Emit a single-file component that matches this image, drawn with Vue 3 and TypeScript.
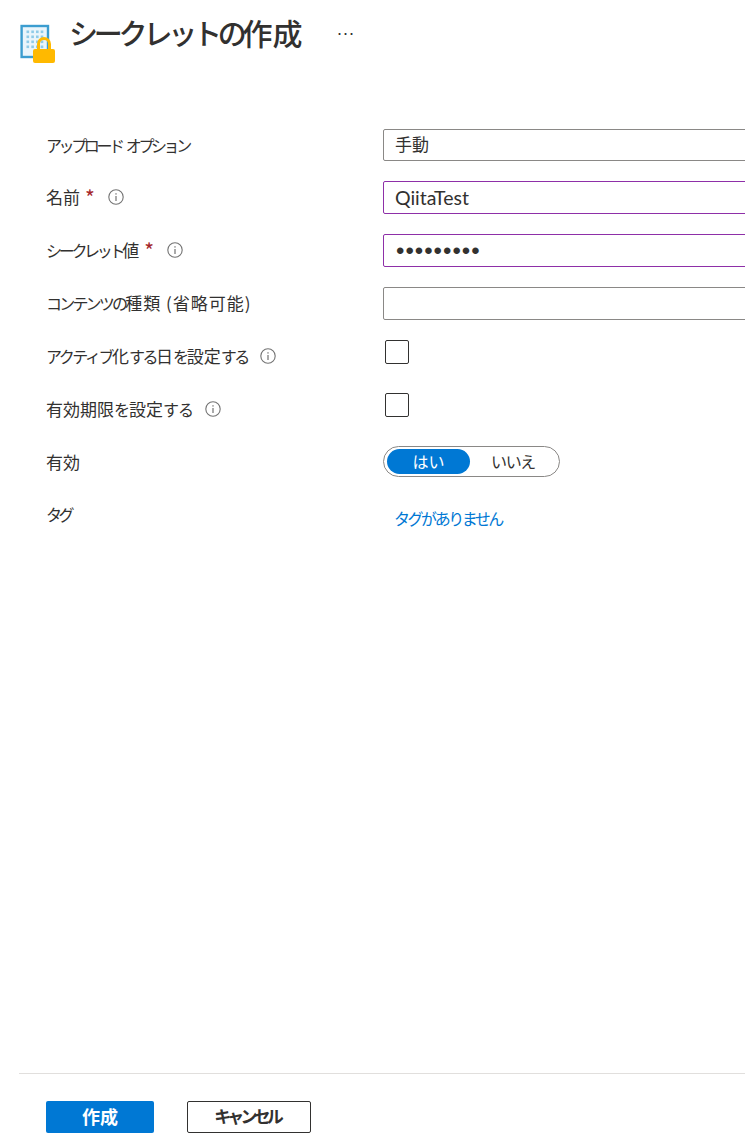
<script setup lang="ts">
interface Row { label: string; kana: number; kanji?: number; req?: boolean; info?: boolean; cls?: string }
const rows: Row[] = [
  { label: 'アップロード オプション', kana: -3.4, cls: 'first' },
  { label: '名前', kana: 0, req: true, info: true },
  { label: 'シークレット値', kana: -3.3, req: true, info: true },
  { label: 'コンテンツの種類 (省略可能)', kana: -2.8, kanji: 1 },
  { label: 'アクティブ化する日を設定する', kana: -2.45, info: true },
  { label: '有効期限を設定する', kana: -1, info: true },
  { label: '有効', kana: 0 },
  { label: 'タグ', kana: -3.4, cls: 'tag' }
]
// Kana runs are set narrower than kanji, as in the reference's UI font.
const split = (r: Row) =>
  (r.label.match(/[\u4e00-\u9fff()]+(?: [\u4e00-\u9fff()]+)*| ?[\u3040-\u30ff]+/g) ?? []).map((t) => {
    const kana = /[\u3040-\u30ff]/.test(t)
    return { t, kana, track: (kana ? r.kana : r.kanji ?? 0) + 'px' }
  })
</script>

<template>
  <div class="page">
    <header class="head">
      <svg class="logo" width="37" height="46" viewBox="0 0 37 46">
        <rect x="2.6" y="8" width="26.4" height="31" fill="#eaf5fb" stroke="#3b9dd0" stroke-width="2.4" />
        <g fill="#8fcbe8">
          <template v-for="y in [12.5, 17.5, 22.5, 27.5]" :key="y">
            <rect v-for="x in [7.5, 12.3, 17, 21.7]" :key="x" :x="x" :y="y" width="2.6" height="2.6" />
          </template>
        </g>
        <path d="M19.5 32v-6a5.5 5.5 0 0 1 11 0v6" fill="none" stroke="#ffb900" stroke-width="3" />
        <rect x="14" y="31" width="22" height="14" rx="2" fill="#ffb900" />
      </svg>
      <h1 class="title"><span class="tkana">シークレットの</span>作成</h1>
      <span class="more">···</span>
    </header>

    <div class="form">
      <div class="labels">
        <div v-for="r in rows" :key="r.label" class="label" :class="r.cls">
          <span class="text">
            <span
              v-for="(p, i) in split(r)"
              :key="i"
              :class="{ kana: p.kana }"
              :style="{ letterSpacing: p.track }"
            >{{ p.t }}</span>
          </span>
          <span v-if="r.req" class="req">*</span>
          <svg v-if="r.info" class="info" width="16" height="16" viewBox="0 0 16 16">
            <circle cx="8" cy="8" r="7.2" fill="none" stroke="#737373" stroke-width="1.1" />
            <rect x="7.4" y="7" width="1.2" height="5" fill="#737373" />
            <rect x="7.4" y="4.2" width="1.2" height="1.4" fill="#737373" />
          </svg>
        </div>
      </div>
      <div class="fields">
        <div class="input plain">手動</div>
        <div class="input tall focus latin">QiitaTest</div>
        <div class="input tall focus dots">•••••••••</div>
        <div class="input tall"></div>
        <div class="check"></div>
        <div class="check"></div>
        <div class="toggle">
          <span class="on">はい</span>
          <span class="off">いいえ</span>
        </div>
        <a class="notags">タグがありません</a>
      </div>
    </div>

    <footer class="foot">
      <button class="primary">作成</button>
      <button class="secondary">キャンセル</button>
    </footer>
  </div>
</template>

<style>
html, body { margin: 0; background: #fff; overflow: hidden; }
</style>

<style scoped>
.page {
  width: 745px;
  height: 1147px;
  overflow: hidden;
  display: flex;
  flex-direction: column;
  font-family: "Noto Sans CJK JP", "Noto Sans", sans-serif;
  font-size: 17px;
  color: #323130;
}
.head {
  height: 129px;
  flex: none;
  display: flex;
  align-items: flex-start;
  padding-left: 19px;
  box-sizing: border-box;
}
.logo { margin-top: 18px; flex: none; }
.title {
  margin: 11px 0 0 13px;
  font-size: 30px;
  line-height: 42px;
  font-weight: 500;
  white-space: nowrap;
}
.tkana { font-size: 29px; letter-spacing: -4.2px; }
.more {
  margin: 21px 0 0 34px;
  font-size: 18px;
  line-height: 24px;
  font-family: "Liberation Sans", sans-serif;
}
.form { display: flex; flex: 1; padding-left: 46px; }
.labels { width: 337px; flex: none; padding-top: 1px; }
.label {
  height: 53px;
  line-height: 30px;
  display: flex;
  align-items: flex-start;
  white-space: nowrap;
}
.first { height: 52px; word-spacing: 4px; }
.tag { margin-top: -1px; }
.kana { font-size: 16px; }
.req { color: #a4262c; margin-left: 5px; font-size: 21px; line-height: 30px; height: 30px; }
.info { margin: 7px 0 0 12px; flex: none; }
.req + .info { margin-left: 13px; }
.fields { flex: 1; min-width: 0; }
.input {
  width: 500px;
  height: 32px;
  box-sizing: border-box;
  border: 1px solid #8a8886;
  border-radius: 2px;
  padding: 0 11px;
  line-height: 29px;
  margin-bottom: 20px;
}
.plain { line-height: 28px; }
.tall { height: 33px; line-height: 31px; }
.focus { border-color: #8e2fa8; }
.latin { font-family: "Lato", sans-serif; font-size: 19.5px; }
.dots { font-family: "Liberation Sans", sans-serif; font-size: 24px; letter-spacing: 1px; padding-left: 12px; }
.check {
  width: 24px;
  height: 24px;
  box-sizing: border-box;
  margin: 0 0 29px 2px;
  border: 1px solid #323130;
  border-radius: 2px;
}
.toggle {
  width: 177px;
  height: 31px;
  box-sizing: border-box;
  border: 1px solid #8a8886;
  border-radius: 16px;
  display: flex;
  align-items: center;
  padding: 0 3px;
}
.toggle span { text-align: center; line-height: 25px; font-size: 16px; }
.on {
  width: 83px;
  height: 25px;
  background: #0078d4;
  color: #fff;
  border-radius: 13px;
}
.off { flex: 1; letter-spacing: -1.4px; }
.notags {
  display: block;
  margin: 29px 0 0 11px;
  line-height: 24px;
  font-size: 16px;
  color: #0078d4;
  letter-spacing: -2.45px;
}
.foot {
  flex: none;
  margin-left: 19px;
  height: 74px;
  border-top: 1px solid #e1dfdd;
  box-sizing: border-box;
  display: flex;
  align-items: flex-start;
  padding: 27px 0 0 27px;
  gap: 33px;
}
button {
  height: 32px;
  box-sizing: border-box;
  border-radius: 2px;
  font-family: "Noto Sans CJK JP", sans-serif;
  font-weight: 700;
  line-height: 1;
  padding: 0 0 3px;
}
.primary { width: 108px; background: #0078d4; color: #fff; border: none; font-size: 18px; }
.secondary { width: 124px; background: #fff; color: #323130; border: 1px solid #323130; font-size: 17px; letter-spacing: -3.9px; padding-right: 4px; }
</style>
